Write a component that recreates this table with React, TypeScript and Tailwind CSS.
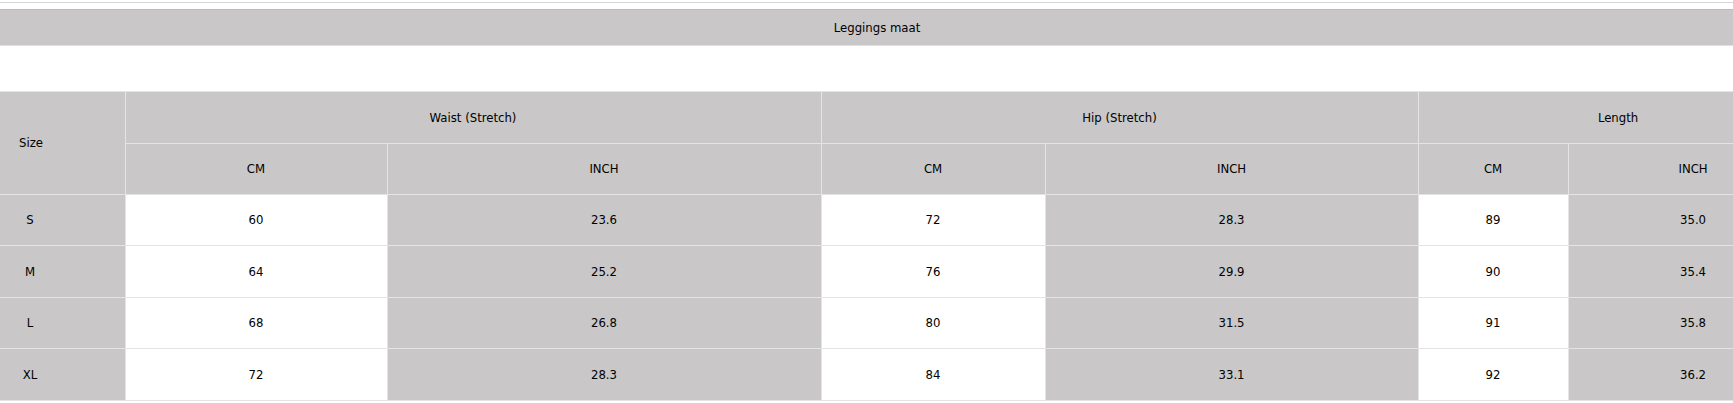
const rows = [
  { size: 'S', w: ['60', '23.6'], h: ['72', '28.3'], l: ['89', '35.0'], hgt: 'h-[51px]' },
  { size: 'M', w: ['64', '25.2'], h: ['76', '29.9'], l: ['90', '35.4'], hgt: 'h-[52px]' },
  { size: 'L', w: ['68', '26.8'], h: ['80', '31.5'], l: ['91', '35.8'], hgt: 'h-[51px]' },
  { size: 'XL', w: ['72', '28.3'], h: ['84', '33.1'], l: ['92', '36.2'], hgt: 'h-[52px]' },
];

const font = { fontFamily: '"DejaVu Sans Condensed", Tahoma, "DejaVu Sans", sans-serif' };

export default function App() {
  const gray = 'bg-[#c9c7c8] border border-[#e4e4e4] text-center p-0';
  const white = 'bg-white border border-[#e4e4e4] text-center p-0';

  return (
    <div className="w-[1733px] h-[403px] overflow-hidden bg-white text-[13px] text-black" style={font}>
      <div className="pt-[2px]">
        <div className="w-[1754px] h-px bg-[#d6d6d6]" />
        <div className="w-[1754px] mt-[6px] h-[37px] bg-[#c9c7c8] border-t border-[#bdbbbc] border-b border-b-[#e0e0e0] flex items-center justify-center">
          Leggings maat
        </div>
        <div className="h-[45px]" />
        <table className="table-fixed border-collapse w-[1818px]">
          <colgroup>
            <col className="w-[125px]" />
            <col className="w-[262px]" />
            <col className="w-[434px]" />
            <col className="w-[224px]" />
            <col className="w-[373px]" />
            <col className="w-[150px]" />
            <col className="w-[250px]" />
          </colgroup>
          <thead>
            <tr className="h-[52px]">
              <th rowSpan={2} className={`${gray} border-l-0 font-normal`}>
                <div className="w-[62px] text-center">Size</div>
              </th>
              <th colSpan={2} className={`${gray} font-normal`}>Waist (Stretch)</th>
              <th colSpan={2} className={`${gray} font-normal`}>Hip (Stretch)</th>
              <th colSpan={2} className={`${gray} font-normal`}>Length</th>
            </tr>
            <tr className="h-[51px]">
              {['CM', 'INCH', 'CM', 'INCH', 'CM', 'INCH'].map((t, i) => (
                <th key={i} className={`${gray} font-normal`}>{t}</th>
              ))}
            </tr>
          </thead>
          <tbody>
            {rows.map(r => (
              <tr key={r.size} className={r.hgt}>
                <td className={`${gray} border-l-0`}>
                  <div className="w-[60px] text-center">{r.size}</div>
                </td>
                <td className={white}>{r.w[0]}</td>
                <td className={gray}>{r.w[1]}</td>
                <td className={white}>{r.h[0]}</td>
                <td className={gray}>{r.h[1]}</td>
                <td className={white}>{r.l[0]}</td>
                <td className={gray}>{r.l[1]}</td>
              </tr>
            ))}
          </tbody>
        </table>
      </div>
    </div>
  );
}
